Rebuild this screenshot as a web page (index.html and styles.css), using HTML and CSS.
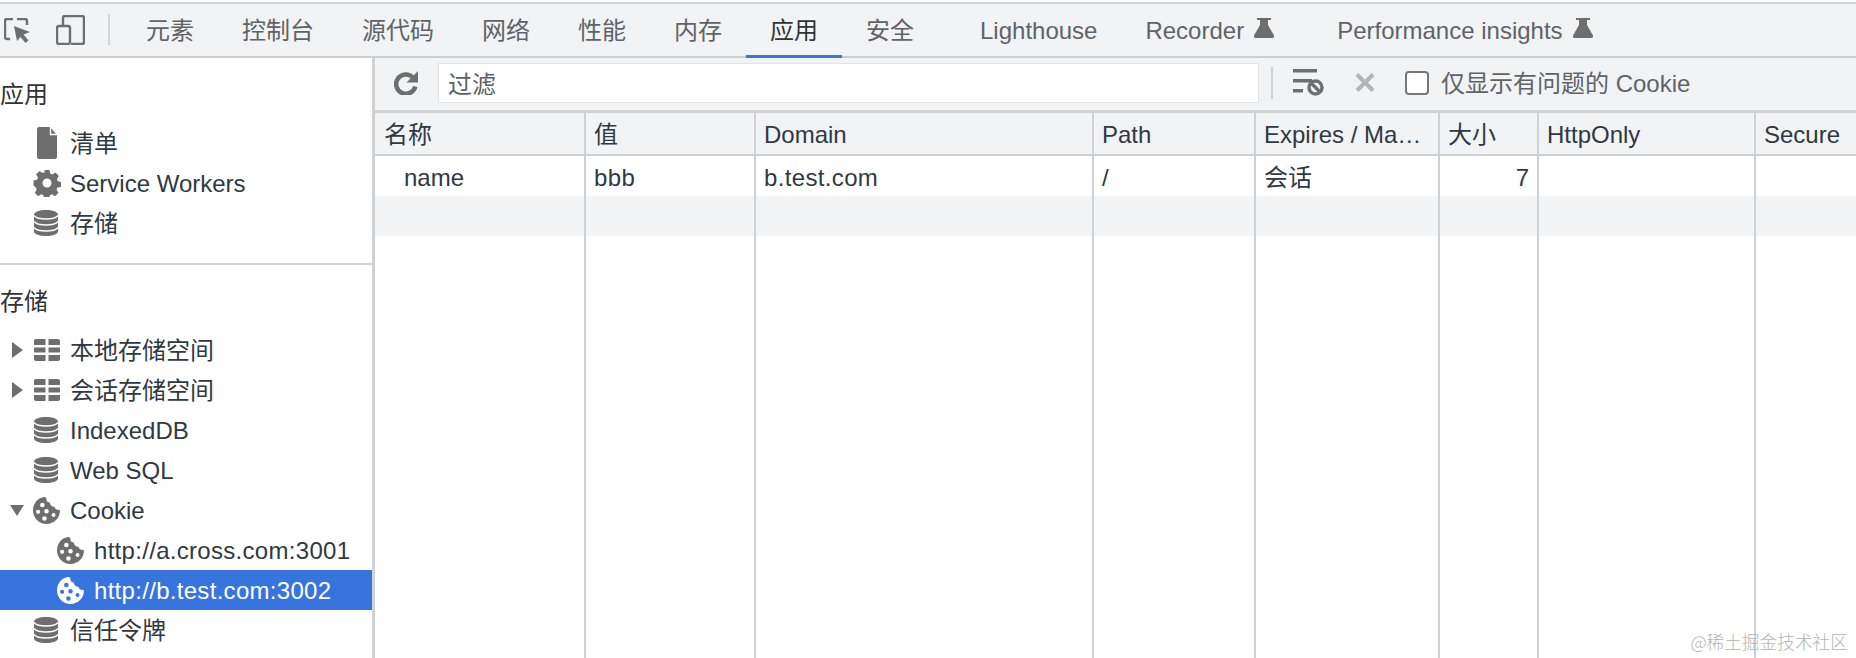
FILE: index.html
```html
<!DOCTYPE html>
<html lang="zh-CN">
<head>
<meta charset="utf-8">
<title>DevTools Application</title>
<link rel="stylesheet" href="styles.css">
</head>
<body>
<svg class="defs" width="0" height="0" aria-hidden="true">
  <symbol id="db" viewBox="0 0 24 26">
    <path d="M0 4.500C0 2 5.400 0 12 0s12 2 12 4.500v17c0 2.500-5.400 4.500-12 4.500S0 24 0 21.500z"/>
    <path class="db-gap" d="M0 5.500c2 2.500 7 3.500 12 3.500s10-1 12-3.500M0 11.500c2 2.500 7 3.500 12 3.500s10-1 12-3.500M0 17.500c2 2.500 7 3.500 12 3.500s10-1 12-3.500"/>
  </symbol>
  <symbol id="grid" viewBox="0 0 26 22">
    <path d="M0 2a2 2 0 0 1 2-2h9.500v6H0zM14.500 0H24a2 2 0 0 1 2 2v4H14.500zM0 8.500h11.500v5H0zM14.500 8.500H26v5H14.500zM0 16h11.500v6H2a2 2 0 0 1-2-2zM14.500 16H26v4a2 2 0 0 1-2 2h-9.500z"/>
  </symbol>
  <symbol id="cookie" viewBox="0 0 26 26">
    <path fill-rule="evenodd" d="M11 0c1.200 0 1.800.7 1.800 1.900 0 2 1.400 3.300 3.200 3.300.6 2.600 2.200 4.100 4.800 4.400.3 1.800 1.800 2.900 3.700 2.700l1.500.8C26 20.300 20.200 26 13 26 5.800 26 0 20.200 0 13 0 6.200 4.800.4 11 0zM9 5.500a2.200 2.200 0 1 0 0 4.400 2.200 2.200 0 0 0 0-4.400zM4.900 12.300a2 2 0 1 0 0 4 2 2 0 0 0 0-4zM13 11.500a2.200 2.200 0 1 0 0 4.400 2.200 2.200 0 0 0 0-4.400zM19.800 15.500a1.900 1.900 0 1 0 0 3.800 1.900 1.900 0 0 0 0-3.800zM11 18.500a2.200 2.200 0 1 0 0 4.400 2.200 2.200 0 0 0 0-4.400z"/>
  </symbol>
  <symbol id="flask" viewBox="0 0 20 20">
    <path d="M3 0h14v2h-3v5l6 10.500c.5 1.200-.2 2.500-1.500 2.500h-17C.2 20-.5 18.700 0 17.500L6 7V2H3z"/>
  </symbol>
</svg>

<nav class="tabbar">
  <svg class="ico-inspect" viewBox="0 0 26 25" aria-hidden="true">
    <path class="stroke" d="M9 1H3a2 2 0 0 0-2 2v16a2 2 0 0 0 2 2h3M13 1h8a2 2 0 0 1 2 2v4"/>
    <path class="fill" d="M10 8l16 6-6.500 2.500 5 6-3 2.500-5-6L13 23z"/>
  </svg>
  <svg class="ico-device" viewBox="0 0 29 30" aria-hidden="true">
    <path class="stroke" d="M7 11V3a2 2 0 0 1 2-2h17a2 2 0 0 1 2 2v24a2 2 0 0 1-2 2H15"/>
    <rect class="stroke" x="1" y="11" width="13" height="18" rx="2"/>
  </svg>
  <span class="tb-sep"></span>
  <a class="tab">元素</a>
  <a class="tab">控制台</a>
  <a class="tab">源代码</a>
  <a class="tab">网络</a>
  <a class="tab">性能</a>
  <a class="tab">内存</a>
  <a class="tab active">应用</a>
  <a class="tab">安全</a>
  <a class="tab tab-lh">Lighthouse</a>
  <a class="tab tab-exp">Recorder <svg class="flask"><use href="#flask"/></svg></a>
  <a class="tab tab-exp">Performance insights <svg class="flask"><use href="#flask"/></svg></a>
</nav>

<div class="body">
  <aside class="sidebar">
    <section class="sec sec-first">
      <h2 class="sec-title">应用</h2>
      <div class="row"><span class="slot"><svg class="ico ico-file" viewBox="0 0 20 32"><path d="M2 0h11l7 8v22a2 2 0 0 1-2 2H2a2 2 0 0 1-2-2V2a2 2 0 0 1 2-2z"/><path d="M13.500 0v7.500H20" fill="none" stroke="#fff" stroke-width="1.300"/></svg></span>清单</div>
      <div class="row"><span class="slot"><svg class="ico ico-gear" viewBox="-1 -1 28 28"><path fill-rule="evenodd" d="M10.500 0h5l.7 3.600 2.200.9 3-2 3.500 3.500-2 3 .9 2.200 3.200.7v5l-3.600.7-.9 2.200 2 3-3.500 3.500-3-2-2.200.9-.7 3.600h-5l-.7-3.600-2.200-.9-3 2-3.500-3.500 2-3-.9-2.200L-.5 15.500v-5l3.600-.7.900-2.200-2-3L5.500 1.100l3 2 2.200-.9zM13 8.500a4.500 4.500 0 1 0 0 9 4.500 4.500 0 0 0 0-9z"/></svg></span>Service Workers</div>
      <div class="row"><span class="slot"><svg class="ico ico-db"><use href="#db"/></svg></span>存储</div>
    </section>
    <section class="sec">
      <h2 class="sec-title">存储</h2>
      <div class="row"><i class="tri tri-r"></i><span class="slot"><svg class="ico ico-grid"><use href="#grid"/></svg></span>本地存储空间</div>
      <div class="row"><i class="tri tri-r"></i><span class="slot"><svg class="ico ico-grid"><use href="#grid"/></svg></span>会话存储空间</div>
      <div class="row"><span class="slot"><svg class="ico ico-db"><use href="#db"/></svg></span>IndexedDB</div>
      <div class="row"><span class="slot"><svg class="ico ico-db"><use href="#db"/></svg></span>Web SQL</div>
      <div class="row"><i class="tri tri-d"></i><span class="slot"><svg class="ico ico-cookie"><use href="#cookie"/></svg></span>Cookie</div>
      <div class="row row-sub"><span class="slot"><svg class="ico ico-cookie"><use href="#cookie"/></svg></span>http://a.cross.com:3001</div>
      <div class="row row-sub selected"><span class="slot"><svg class="ico ico-cookie"><use href="#cookie"/></svg></span>http://b.test.com:3002</div>
      <div class="row"><span class="slot"><svg class="ico ico-db"><use href="#db"/></svg></span>信任令牌</div>
    </section>
  </aside>

  <main class="main">
    <div class="filterbar">
      <svg class="ico-refresh" viewBox="0 0 24 24" aria-hidden="true">
        <path class="arc" d="M19 6.500A9.700 9.700 0 1 0 21.300 15.500"/>
        <path d="M24 0v11.500H12.500z"/>
      </svg>
      <div class="filter-input">过滤</div>
      <span class="fb-sep"></span>
      <svg class="ico-clear" viewBox="0 0 31 27" aria-hidden="true">
        <path d="M0 0h24v3.500H0zM0 10h19v3.500H0zM0 20h10v3.500H0z"/>
        <circle class="ring" cx="22.500" cy="18.500" r="6.500"/>
        <path class="ring" d="M18 14l9 9"/>
      </svg>
      <svg class="ico-x" viewBox="0 0 20 19" aria-hidden="true"><path d="M2 1.500l16 16M18 1.500l-16 16"/></svg>
      <span class="checkbox"></span>
      <span class="check-label">仅显示有问题的 Cookie</span>
    </div>
    <div class="table-wrap">
      <table class="cookies">
        <colgroup>
          <col class="c1"><col class="c2"><col class="c3"><col class="c4"><col class="c5"><col class="c6"><col class="c7"><col class="c8">
        </colgroup>
        <thead>
          <tr><th class="first">名称</th><th>值</th><th>Domain</th><th>Path</th><th>Expires / Ma…</th><th>大小</th><th>HttpOnly</th><th>Secure</th></tr>
        </thead>
        <tbody>
          <tr class="r"><td class="name">name</td><td class="wide">bbb</td><td class="wide">b.test.com</td><td>/</td><td>会话</td><td class="num">7</td><td></td><td></td></tr>
          <tr class="r alt"><td></td><td></td><td></td><td></td><td></td><td></td><td></td><td></td></tr>
          <tr class="filler"><td></td><td></td><td></td><td></td><td></td><td></td><td></td><td></td></tr>
        </tbody>
      </table>
    </div>
  </main>
</div>
<div class="watermark">@稀土掘金技术社区</div>
</body>
</html>
```
FILE: styles.css
```css
* { box-sizing: border-box; }
html, body { height: 100%; }
body {
  margin: 0;
  height: 658px;
  overflow: hidden;
  display: flex;
  flex-direction: column;
  background: #fff;
  color: #303942;
  font: 24px/40px "Liberation Sans", "Noto Sans CJK SC", sans-serif;
  padding-top: 2px;
}
.defs { position: absolute; }
.db-gap { fill: none; stroke: #fff; stroke-width: 1.300; }

/* top tab bar */
.tabbar {
  height: 56px;
  flex: none;
  display: flex;
  align-items: stretch;
  background: #f1f3f4;
  border-top: 2px solid #d3d4d6;
  border-bottom: 2px solid #cbcdd0;
  color: #5f6368;
  padding-left: 4px;
}
.tabbar .stroke { fill: none; stroke: #6e6e6e; stroke-width: 2.4; }
.tabbar .fill { fill: #6e6e6e; }
.ico-inspect { width: 26px; height: 25px; margin-top: 14px; }
.ico-device { width: 29px; height: 30px; margin: 11px 0 0 26px; }
.tb-sep { width: 2px; height: 31px; margin: 10px 12px 0 23px; background: #d4d5d7; }
.tab {
  position: relative;
  padding: 2px 24px 0;
  line-height: 48px;
  white-space: nowrap;
  display: flex;
  align-items: center;
  gap: 10px;
}
.tab.active { color: #333; }
.tab.active::after {
  content: "";
  position: absolute;
  left: 0; right: 0; bottom: -2px;
  height: 3px;
  background: #3a76d8;
}
.tab-lh { margin-left: 18px; }
.tab-exp { padding-right: 42px; margin-right: -3px; }
.flask { width: 20px; height: 20px; fill: #6e6e6e; margin-top: -6px; }

/* body split */
.body { flex: 1; min-height: 0; display: flex; }
.sidebar {
  width: 375px;
  flex: none;
  border-right: 3px solid #d0d1d3;
  overflow: hidden;
}
.sec { padding-top: 17px; }
.sec-first { padding-bottom: 20px; border-bottom: 2px solid #d3d4d6; height: 207px; }
.sec-title { margin: 0 0 8px; font: inherit; color: #333; height: 40px; }
.row {
  height: 40px;
  position: relative;
  display: flex;
  align-items: center;
  padding: 2px 0 0 70px;
  color: #303942;
  white-space: nowrap;
}
.slot {
  position: absolute;
  left: 30px;
  top: 0;
  width: 34px;
  height: 40px;
  display: flex;
  align-items: center;
  justify-content: center;
}
.ico { fill: #6e6e6e; display: block; }
.ico-file { width: 20px; height: 32px; }
.ico-gear { width: 28px; height: 28px; }
.ico-db { width: 24px; height: 26px; margin-right: 2px; }
.ico-grid { width: 26px; height: 22px; }
.ico-cookie { width: 27px; height: 27px; margin-right: 1px; }
.tri { position: absolute; width: 0; height: 0; border-style: solid; border-color: transparent; }
.tri-r { left: 12px; top: 12px; border-width: 8px 0 8px 11px; border-left-color: #6e6e6e; }
.tri-d { left: 10px; top: 15px; border-width: 11px 7.500px 0; border-top-color: #6e6e6e; }
.row-sub { padding-left: 94px; letter-spacing: .3px; }
.row-sub .slot { left: 54px; }
.selected { background: #3874de; color: #fff; }
.selected .ico { fill: #fff; }

/* main pane */
.main { flex: 1; min-width: 0; display: flex; flex-direction: column; }
.filterbar {
  height: 55px;
  flex: none;
  display: flex;
  align-items: center;
  background: #f1f3f4;
  border-bottom: 3px solid #d3d4d6;
  color: #5f6368;
  padding: 0 0 3px 19px;
}
.ico-refresh { width: 24px; height: 24px; fill: #6e6e6e; flex: none; }
.ico-refresh .arc { fill: none; stroke: #6e6e6e; stroke-width: 4.500; }
.filter-input {
  width: 821px;
  height: 40px;
  margin-left: 20px;
  padding: 3px 0 0 9px;
  line-height: 36px;
  background: #fff;
  border: 1px solid #e2e3e5;
  color: #5a5f64;
}
.fb-sep { width: 2px; height: 32px; margin: 0 20px 0 12px; background: #cfd0d2; }
.ico-clear { width: 31px; height: 27px; fill: #6e6e6e; }
.ico-clear .ring { fill: none; stroke: #6e6e6e; stroke-width: 3.400; }
.ico-x { width: 20px; height: 19px; margin-left: 31px; fill: none; stroke: #b3b4b6; stroke-width: 4; }
.checkbox {
  width: 24px;
  height: 24px;
  margin-left: 30px;
  background: #fff;
  border: 2px solid #767676;
  border-radius: 4px;
}
.check-label { margin-left: 12px; padding-top: 2px; white-space: nowrap; }

/* table */
.table-wrap { flex: 1; min-height: 0; overflow: hidden; }
.cookies {
  width: 1481px;
  height: 100%;
  table-layout: fixed;
  border-collapse: separate;
  border-spacing: 0;
  line-height: 36px;
}
.c1 { width: 211px; }
.c2 { width: 170px; }
.c3 { width: 338px; }
.c4 { width: 162px; }
.c5 { width: 184px; }
.c6 { width: 99px; }
.c7 { width: 217px; }
.c8 { width: 100px; }
.cookies th {
  height: 43px;
  padding: 2px 8px 0;
  background: #f1f3f4;
  border-right: 2px solid #cfd0d2;
  border-bottom: 2px solid #cfd0d2;
  font-weight: 400;
  text-align: left;
  white-space: nowrap;
}
.cookies th.first { padding-left: 9px; }
.cookies th:last-child, .cookies td:last-child { border-right: 0; }
.cookies td {
  padding: 3px 8px 0;
  border-right: 2px solid #cfd0d2;
}
.r td { height: 40px; }
.alt td { background: #f1f3f4; }
.cookies td.name { padding-left: 29px; }
.cookies td.wide { letter-spacing: .35px; }
.cookies td.num { text-align: right; }
.filler td { height: auto; }

.watermark {
  position: absolute;
  right: 8px;
  bottom: 7px;
  font: 300 17.700px/20px "Noto Sans CJK SC", sans-serif;
  color: #b4b4b4;
  white-space: nowrap;
}
```
